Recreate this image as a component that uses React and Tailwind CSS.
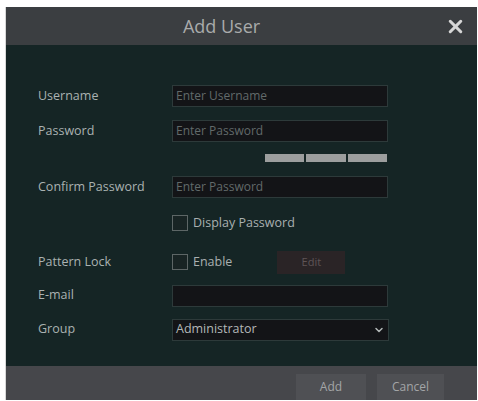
import { ChevronDown, X } from "lucide-react";

// Fila con etiqueta a la izquierda y control a la derecha
const Row = ({ label, className = "", children }) => (
  <div className={`flex items-center ${className}`}>
    <div className="w-[134px] shrink-0 text-[12.5px] text-[#aab2b1]">{label}</div>
    {children}
  </div>
);

const Field = ({ placeholder }) => (
  <div className="w-[216px] h-[22px] bg-[#131417] border border-[#2d3a3a] flex items-center px-[3px] text-[12px] text-[#626a6a]">
    {placeholder}
  </div>
);

const Check = ({ label }) => (
  <div className="flex items-center gap-[5px] text-[12.5px] text-[#a9b0b0]">
    <span className="w-[16px] h-[16px] border-[1.5px] border-[#5d6666] bg-[#182424]" />
    {label}
  </div>
);

const App = () => {
  return (
    <div
      className="w-[478px] h-[401px] bg-white pt-[7px] pl-[5px]"
      style={{ fontFamily: '"Open Sans", "Noto Sans", sans-serif' }}
    >
      <div className="w-[472px] h-[393px] flex flex-col bg-[#152525] border-l border-[#d8d8d8]">
        {/* Titulo */}
        <div className="h-[38px] shrink-0 bg-[#3b3e41] flex items-center justify-center pr-[40px] relative">
          <span className="text-[18px] text-[#a9abab]">Add User</span>
          <X className="absolute right-[11px] top-[9px] text-[#d6d6d6]" size={21} strokeWidth={3.5} />
        </div>

        {/* Formulario */}
        <div className="flex-1 pl-[32px] pt-[40px]">
          <Row label="Username">
            <Field placeholder="Enter Username" />
          </Row>
          <Row label="Password" className="mt-[13px]">
            <Field placeholder="Enter Password" />
          </Row>
          <div className="flex gap-[2px] ml-[227px] mt-[12px]">
            <span className="w-[39px] h-[8px] bg-[#9c9e9e]" />
            <span className="w-[40px] h-[8px] bg-[#9c9e9e]" />
            <span className="w-[39px] h-[8px] bg-[#9c9e9e]" />
          </div>
          <Row label="Confirm Password" className="mt-[14px]">
            <Field placeholder="Enter Password" />
          </Row>
          <div className="ml-[134px] mt-[16px]">
            <Check label="Display Password" />
          </div>
          <Row label="Pattern Lock" className="mt-[18px]">
            <Check label="Enable" />
            <div className="ml-[45px] w-[68px] h-[23px] bg-[#2a2426] flex items-center justify-center text-[11px] text-[#5f5456]">
              Edit
            </div>
          </Row>
          <Row label="E-mail" className="mt-[11px]">
            <Field placeholder="" />
          </Row>
          <Row label="Group" className="mt-[12px]">
            <div className="w-[217px] h-[22px] bg-[#131417] border border-[#2d3a3a] flex items-center justify-between px-[3px] text-[12.5px] text-[#b3b8b8]">
              Administrator
              <ChevronDown size={12} strokeWidth={3} className="text-[#b3b8b8]" />
            </div>
          </Row>
        </div>

        {/* Botonera */}
        <div className="h-[34px] shrink-0 bg-[#46474b] flex items-end justify-end gap-[11px] pr-[33px]">
          <div className="w-[70px] h-[26px] bg-[#4f5054] flex items-center justify-center text-[12px] text-[#a3a5a7]">
            Add
          </div>
          <div className="w-[67px] h-[26px] bg-[#4f5054] flex items-center justify-center text-[12px] text-[#a3a5a7]">
            Cancel
          </div>
        </div>
      </div>
    </div>
  );
};

export default App;
